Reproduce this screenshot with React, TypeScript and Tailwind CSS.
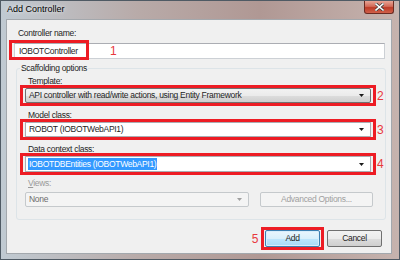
import React from 'react';

const Arrow = ({ color = '#1a1a1a' }: { color?: string }) => (
    <svg width="5" height="3" viewBox="0 0 5 3" className="shrink-0">
        <path d="M0 0 L5 0 L2.5 3 Z" fill={color} />
    </svg>
);

const Num = ({ n }: { n: string }) => (
    <span className="absolute left-full top-1/2 -translate-y-1/2 ml-[4px] text-[12px] leading-none text-[#e8383d]">
        {n}
    </span>
);

export default function App() {
    return (
        <div
            className="w-[400px] h-[260px] relative overflow-hidden flex flex-col pl-[5px] pr-[7px] border border-[#4f5a64] bg-[linear-gradient(90deg,#c0cad2_0%,#b8aaa8_35%,#b09894_65%,#c6b3ae_100%)]"
            style={{ fontFamily: '"Liberation Sans", Arial, sans-serif' }}
        >
            {/* Title bar */}
            <div className="h-[18px] shrink-0 flex items-center pl-[1px] text-[9px] text-black [text-shadow:0_0_4px_#ffffff]">
                Add Controller
            </div>
            <div className="absolute right-[5px] top-0 w-[30px] h-[13px] rounded-b-[3px] border border-t-0 border-[#6b2b22] bg-[linear-gradient(180deg,#e8a596_0%,#d26a58_45%,#bd3b27_55%,#d0604a_100%)] flex items-center justify-center">
                <svg width="9" height="8" viewBox="0 0 9 8">
                    <path d="M1 1 L8 7 M8 1 L1 7" stroke="#3a3a3a" strokeWidth="3" strokeLinecap="square" />
                    <path d="M1 1 L8 7 M8 1 L1 7" stroke="#ffffff" strokeWidth="1.6" strokeLinecap="square" />
                </svg>
            </div>

            {/* Client area */}
            <div className="h-[235px] shrink-0 bg-[#f0f0f0] border border-[#a3a8ad] flex flex-col text-[8.5px] tracking-[-0.3px] text-[#1e1e1e]">
                <div className="mt-[7px] ml-[11px] h-[12px] leading-[12px]">Controller name:</div>
                <div className="relative mt-[4px] ml-[7px] w-[371px] h-[16px] bg-white border border-[#ccd0d5] border-t-[#abadb3] flex items-center pl-[4px]">
                    IOBOTController
                    <div className="absolute left-[-6px] top-[-4px] w-[80px] h-[20px] border-[3px] border-[#ed1c24]" />
                    <span className="absolute left-[95px] top-1/2 -translate-y-1/2 text-[12px] leading-none text-[#e8383d]">1</span>
                </div>

                {/* Scaffolding options group */}
                <div className="relative mt-[9px] ml-[9px] w-[370px] border border-[#dde4e8] rounded-[3px] flex flex-col pb-[12px]">
                    <span className="absolute left-[3px] top-[-6px] px-[1px] bg-[#f0f0f0] leading-[10px]">Scaffolding options</span>

                    <div className="mt-[7px] ml-[11px] h-[10px] leading-[10px]">Template:</div>
                    <div className="relative mt-[-1px] ml-[3px] w-[356px] h-[21px] border-[3px] border-[#ed1c24] px-[2px] py-0 flex items-center">
                        <div className="w-full h-[15px] border border-[#707070] rounded-[2px] bg-[linear-gradient(180deg,#f2f2f2_0%,#ebebeb_50%,#dddddd_51%,#cfcfcf_100%)] flex items-center justify-between pl-[3px] pr-[6px]">
                            <span>API controller with read/write actions, using Entity Framework</span>
                            <Arrow />
                        </div>
                        <Num n="2" />
                    </div>

                    <div className="mt-[4px] ml-[11px] h-[10px] leading-[10px]">Model class:</div>
                    <div className="relative mt-[-1px] ml-[3px] w-[356px] h-[21px] border-[3px] border-[#ed1c24] px-[2px] flex items-center">
                        <div className="w-full h-[15px] border border-[#abadb3] bg-white flex items-center justify-between pl-[3px] pr-[6px]">
                            <span>ROBOT (IOBOTWebAPI1)</span>
                            <Arrow />
                        </div>
                        <Num n="3" />
                    </div>

                    <div className="mt-[4px] ml-[11px] h-[10px] leading-[10px]">Data context class:</div>
                    <div className="relative mt-[-1px] ml-[3px] w-[356px] h-[22px] border-[3px] border-[#ed1c24] px-[2px] flex items-center">
                        <div className="w-full h-[16px] border border-[#abadb3] bg-white flex items-center justify-between pl-[2px] pr-[6px]">
                            <span className="bg-[#3399ff] text-white px-[1px] leading-[12px]">IOBOTDBEntities (IOBOTWebAPI1)</span>
                            <Arrow />
                        </div>
                        <Num n="4" />
                    </div>

                    <div className="mt-[3px] ml-[11px] h-[10px] leading-[10px] text-[#9a9a9a]">
                        <span className="underline">V</span>iews:
                    </div>
                    <div className="mt-[4px] ml-[8px] flex items-center gap-[11px]">
                        <div className="w-[224px] h-[15px] border border-[#c5c9cc] rounded-[2px] bg-[#f4f4f4] flex items-center justify-between pl-[3px] pr-[6px] text-[#6d6d6d]">
                            <span>None</span>
                            <Arrow color="#a0a0a0" />
                        </div>
                        <div className="w-[113px] h-[15px] border border-[#c5c9cc] rounded-[2px] bg-[#f4f4f4] flex items-center justify-center text-[#a0a0a0]">
                            Advanced Options...
                        </div>
                    </div>
                </div>

                {/* Buttons */}
                <div className="mt-[10px] pr-[9px] flex justify-end gap-[7px]">
                    <div className="relative w-[55px] h-[17px] border border-[#3c7fb1] rounded-[2px] bg-[linear-gradient(180deg,#eaf6fd_0%,#d9f0fc_50%,#bee6fd_51%,#a7d9f5_100%)] shadow-[inset_0_0_0_1px_#d8eefc] flex items-center justify-center">
                        Add
                        <div className="absolute left-[-5px] top-[-4px] w-[63px] h-[23px] border-[3px] border-[#ed1c24]" />
                        <span className="absolute right-full top-1/2 -translate-y-1/2 mr-[8px] text-[12px] leading-none text-[#e8383d]">5</span>
                    </div>
                    <div className="w-[55px] h-[17px] border border-[#707070] rounded-[2px] bg-[linear-gradient(180deg,#f2f2f2_0%,#ebebeb_50%,#dddddd_51%,#cfcfcf_100%)] flex items-center justify-center">
                        Cancel
                    </div>
                </div>
            </div>
        </div>
    );
}
